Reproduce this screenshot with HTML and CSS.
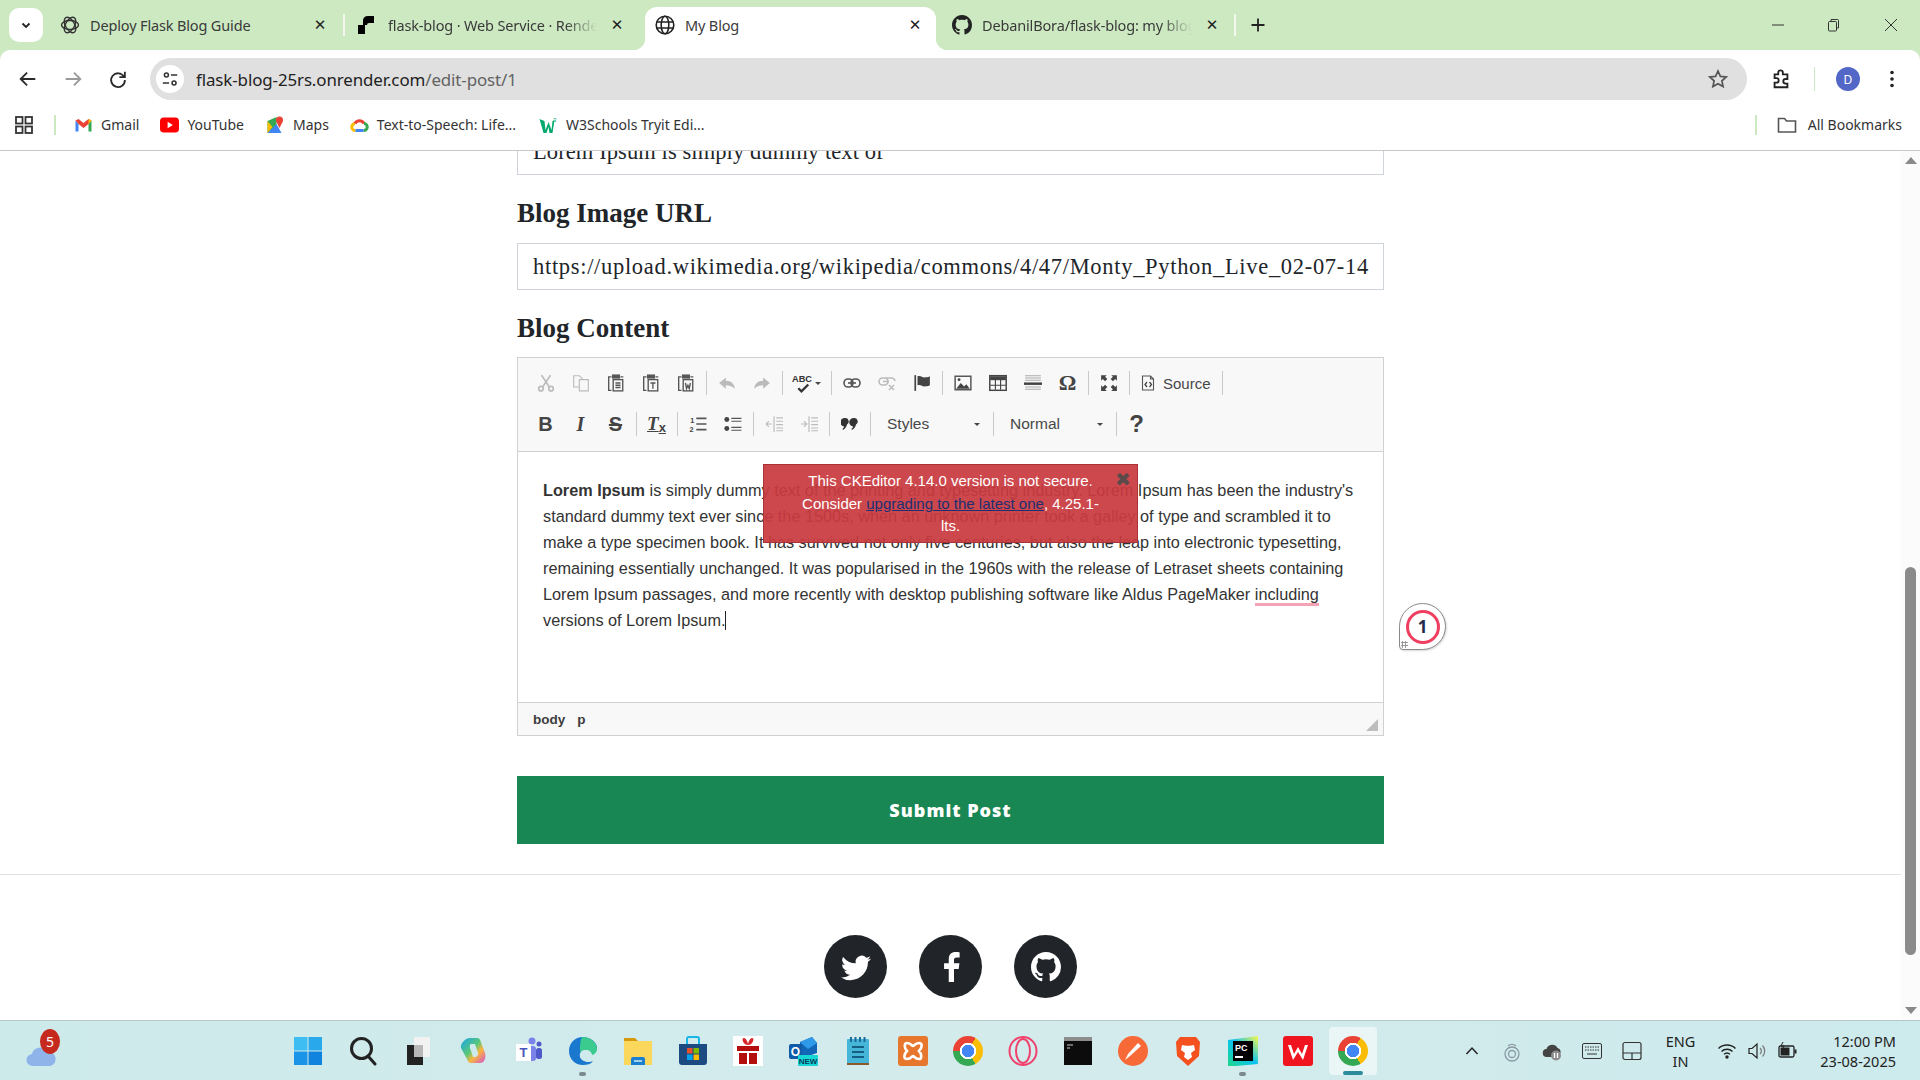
FILE: index.html
```html
<!DOCTYPE html>
<html lang="en">
<head>
<meta charset="utf-8">
<title>My Blog</title>
<link rel="stylesheet" href="styles.css">
</head>
<body>
<div class="screen">
  <header class="chrome">
    <div class="tabstrip">
      <button class="tab-menu"><svg viewBox="0 0 12 12" class="i12"><path d="M2.5 4.5 6 8l3.5-3.5" fill="none" stroke="#222" stroke-width="1.8"/></svg></button>
      <div class="tab tab-a">
        <svg class="favicon" viewBox="0 0 20 20" fill="none" stroke="#333" stroke-width="1.4"><ellipse cx="10" cy="10" rx="8.5" ry="4.5"/><ellipse cx="10" cy="10" rx="8.5" ry="4.5" transform="rotate(60 10 10)"/><ellipse cx="10" cy="10" rx="8.5" ry="4.5" transform="rotate(120 10 10)"/></svg>
        <span class="tab-title">Deploy Flask Blog Guide</span>
        <span class="tab-x">✕</span>
      </div>
      <div class="tab tab-b">
        <svg class="favicon" viewBox="0 0 20 20"><path d="M2 10h7v9H2zM7 5a5 5 0 0 1 5-4h6v7h-5a2 2 0 0 0-2 2H7z" fill="#000"/></svg>
        <span class="tab-title">flask-blog · Web Service · Render Dashboard</span>
        <span class="tab-x">✕</span>
      </div>
      <div class="tab tab-c">
        <svg class="favicon" viewBox="0 0 20 20" fill="none" stroke="#222" stroke-width="1.6"><circle cx="10" cy="10" r="8.800"/><ellipse cx="10" cy="10" rx="3.800" ry="8.800"/><path d="M1.500 7h17M1.500 13h17"/></svg>
        <span class="tab-title">My Blog</span>
        <span class="tab-x">✕</span>
      </div>
      <div class="tab tab-d">
        <svg class="favicon" viewBox="0 0 16 16"><path fill="#222" d="M8 0C3.58 0 0 3.58 0 8c0 3.54 2.29 6.53 5.47 7.59.4.07.55-.17.55-.38 0-.19-.01-.82-.01-1.49-2.01.37-2.53-.49-2.69-.94-.09-.23-.48-.94-.82-1.13-.28-.15-.68-.52-.01-.53.63-.01 1.08.58 1.23.82.72 1.21 1.87.87 2.33.66.07-.52.28-.87.51-1.07-1.78-.2-3.64-.89-3.64-3.95 0-.87.31-1.59.82-2.15-.08-.2-.36-1.02.08-2.12 0 0 .67-.21 2.2.82.64-.18 1.32-.27 2-.27.68 0 1.36.09 2 .27 1.53-1.04 2.2-.82 2.2-.82.44 1.1.16 1.92.08 2.12.51.56.82 1.27.82 2.15 0 3.07-1.87 3.75-3.65 3.95.29.25.54.73.54 1.48 0 1.07-.01 1.93-.01 2.2 0 .21.15.46.55.38A8.013 8.013 0 0016 8c0-4.42-3.58-8-8-8z"/></svg>
        <span class="tab-title">DebanilBora/flask-blog: my blog website</span>
        <span class="tab-x">✕</span>
      </div>
      <svg class="new-tab" viewBox="0 0 16 16"><path d="M8 1.500v13M1.500 8h13" stroke="#222" stroke-width="1.800"/></svg>
      <div class="win-controls">
        <svg class="win-btn" viewBox="0 0 14 14"><path d="M1 7h12" stroke="#333" stroke-width="1"/></svg>
        <svg class="win-btn" viewBox="0 0 14 14" fill="none" stroke="#333"><rect x="2.500" y="3.500" width="8" height="9.500" rx="1"/><path d="M5 3.500V1.500h6.500a1 1 0 0 1 1 1V10h-2"/></svg>
        <svg class="win-btn win-close" viewBox="0 0 14 14"><path d="m1 1 12 12M13 1 1 13" stroke="#333"/></svg>
      </div>
    </div>
    <div class="toolbar">
      <svg class="nav-btn" viewBox="0 0 24 24" fill="none" stroke="#2b2b2b" stroke-width="2"><path d="M20 12H5M11 5l-7 7 7 7"/></svg>
      <svg class="nav-btn" viewBox="0 0 24 24" fill="none" stroke="#9a9a9a" stroke-width="2"><path d="M4 12h15M13 5l7 7-7 7"/></svg>
      <svg class="nav-btn" viewBox="0 0 24 24" fill="none" stroke="#2b2b2b" stroke-width="2"><path d="M18.500 9.500A7.500 7.500 0 1 0 19.500 13M19.500 4v6h-6"/></svg>
      <div class="omnibox">
        <span class="site-chip"><svg viewBox="0 0 20 20" class="i18" fill="none" stroke="#333" stroke-width="1.700"><circle cx="6" cy="5.500" r="2.200"/><path d="M11 5.500h7M2 14.500h7"/><circle cx="14.500" cy="14.500" r="2.200"/></svg></span>
        <span class="url">flask-blog-25rs.onrender.com<span class="url-path">/edit-post/1</span></span>
        <svg class="star" viewBox="0 0 20 20" fill="none" stroke="#555" stroke-width="1.700"><path d="m10 2 2.400 5.400 5.800.6-4.300 3.900 1.200 5.700-5.100-2.900-5.100 2.900 1.200-5.700L1.800 8l5.800-.6z"/></svg>
      </div>
      <svg class="ext-btn" viewBox="0 0 24 24" fill="none" stroke="#222" stroke-width="2"><path d="M5 7h4V5a2.500 2.500 0 0 1 5 0v2h5v5h-2a2.500 2.500 0 0 0 0 5h2v4H5v-5h2a2.500 2.500 0 0 0 0-5H5z"/></svg>
      <span class="tool-sep"></span>
      <span class="avatar">D</span>
      <svg class="dots" viewBox="0 0 20 20"><circle cx="10" cy="3.500" r="1.800" fill="#222"/><circle cx="10" cy="10" r="1.800" fill="#222"/><circle cx="10" cy="16.500" r="1.800" fill="#222"/></svg>
    </div>
    <div class="bookmarks">
      <svg class="apps" viewBox="0 0 18 18" fill="none" stroke="#333" stroke-width="1.800"><rect x="1" y="1" width="6.500" height="6.500"/><rect x="10.500" y="1" width="6.500" height="6.500"/><rect x="1" y="10.500" width="6.500" height="6.500"/><rect x="10.500" y="10.500" width="6.500" height="6.500"/></svg>
      <span class="bm-sep"></span>
      <div class="bm bm-gmail"><svg class="bm-ic" viewBox="0 0 18 18"><path d="M1 4.500v11h3V8z" fill="#4285f4"/><path d="M14 8v7.500h3v-11z" fill="#34a853"/><path d="M1 4.500 4 3l5 4 5-4 3 1.500L14 8l-5 4-5-4z" fill="#ea4335"/><path d="M14 3l3 1.500L14 8z" fill="#fbbc04"/></svg><span>Gmail</span></div>
      <div class="bm bm-yt"><svg class="bm-ic" viewBox="0 0 20 18"><rect y="1" width="20" height="16" rx="4" fill="#f00"/><path d="m8 5.500 5.500 3.500L8 12.500z" fill="#fff"/></svg><span>YouTube</span></div>
      <div class="bm bm-maps"><svg class="bm-ic" viewBox="0 0 18 18"><path d="M1 5 10 1v16H1z" fill="#34a853"/><path d="M1 17 10 8l5 9z" fill="#4285f4"/><path d="M1 5v12l5-6z" fill="#fbbc04"/><circle cx="13" cy="4" r="3.500" fill="#ea4335"/><path d="m10 6 3 6 3-6z" fill="#ea4335"/></svg><span>Maps</span></div>
      <div class="bm bm-tts"><svg class="bm-ic" viewBox="0 0 18 18" fill="none" stroke-width="3"><path d="M5 14.500a3.500 3.500 0 0 1-.5-7" stroke="#fbbc04"/><path d="M4.500 7.500a5 5 0 0 1 9 0" stroke="#ea4335"/><path d="M13.500 7.500a3.500 3.500 0 0 1-.5 7" stroke="#34a853"/><path d="M5 14.500h8" stroke="#4285f4"/></svg><span>Text-to-Speech: Life...</span></div>
      <div class="bm bm-w3"><svg class="bm-ic" viewBox="0 0 18 18"><path d="m0 3 5 2 1 9 3-8 3 8 1-9 2-1-2 13h-3L9 11l-2 6H4z" fill="#04aa6d"/><text x="13.500" y="6" font-size="6" fill="#04aa6d" font-family="Liberation Sans">3</text></svg><span>W3Schools Tryit Edi...</span></div>
      <span class="bm-sep bm-sep-r"></span>
      <svg class="bm-folder" viewBox="0 0 20 18" fill="none" stroke="#555" stroke-width="1.600"><path d="M1.500 2.500h6l2 2.500h9v11h-17z"/></svg>
      <span class="bm-all">All Bookmarks</span>
    </div>
  </header>

  <div class="viewport">
    <main class="page">
      <div class="column">
        <div class="field field-first">Lorem Ipsum is simply dummy text of</div>
        <h2 class="label">Blog Image URL</h2>
        <div class="field">https://upload.wikimedia.org/wikipedia/commons/4/47/Monty_Python_Live_02-07-14</div>
        <h2 class="label label-tight">Blog Content</h2>

        <section class="editor">
          <div class="cke-top">
            <div class="cke-row">
              <span class="cbtn off"><svg viewBox="0 0 16 16" class="ci" fill="none" stroke="#333" stroke-width="1.500"><circle cx="3.500" cy="13" r="2"/><circle cx="12.500" cy="13" r="2"/><path d="M5 11.500 12 1M11 11.500 4 1"/></svg></span>
              <span class="cbtn off"><svg viewBox="0 0 16 16" class="ci" fill="none" stroke="#333"><path d="M6 11.500H1.500v-10h5l3 3M9.500 5h5v10h-8V5z"/></svg></span>
              <span class="cbtn"><svg viewBox="0 0 16 16" class="ci" fill="none" stroke="#555" stroke-width="1.200"><path d="M4 2.500H1.500v12H4M12 2.500H14.500"/><rect x="5" y="1" width="6" height="2.500" fill="#555"/><rect x="5.500" y="5" width="8.500" height="10"/><path d="M7.500 8h4.500M7.500 10h4.500M7.500 12h4.500"/></svg></span>
              <span class="cbtn"><svg viewBox="0 0 16 16" class="ci" fill="none" stroke="#555" stroke-width="1.200"><path d="M4 2.500H1.500v12H4M12 2.500H14.500"/><rect x="5" y="1" width="6" height="2.500" fill="#555"/><rect x="5.500" y="5" width="8.500" height="10"/><path d="M7.500 8h4.500M9.700 8v5"/></svg></span>
              <span class="cbtn"><svg viewBox="0 0 16 16" class="ci" fill="none" stroke="#555" stroke-width="1.200"><path d="M4 2.500H1.500v12H4M12 2.500H14.500"/><rect x="5" y="1" width="6" height="2.500" fill="#555"/><rect x="5.500" y="5" width="8.500" height="10"/><path d="M7.500 8l1 5 1.200-3 1.200 3 1-5"/></svg></span>
              <span class="csep"></span>
              <span class="cbtn off"><svg viewBox="0 0 16 16" class="ci"><path d="M7 3 1 8l6 5v-3c3 0 5 .5 8 3-.5-4-3-7-8-7z" fill="#333"/></svg></span>
              <span class="cbtn off"><svg viewBox="0 0 16 16" class="ci"><path d="m9 3 6 5-6 5v-3c-3 0-5 .5-8 3 .5-4 3-7 8-7z" fill="#333"/></svg></span>
              <span class="csep"></span>
              <span class="cbtn cbtn-spell"><svg viewBox="0 0 20 20" class="ci-spell"><text x="0" y="9" font-size="9.500" font-weight="700" textLength="19" lengthAdjust="spacingAndGlyphs" fill="#333" font-family="Liberation Sans">ABC</text><path d="m6 14.500 3 3 6.500-6.500" fill="none" stroke="#333" stroke-width="2.200"/></svg><i class="caret"></i></span>
              <span class="csep"></span>
              <span class="cbtn"><svg viewBox="0 0 18 16" class="ci" fill="none" stroke="#555" stroke-width="1.600"><rect x="1" y="4" width="9" height="8" rx="4"/><rect x="8" y="4" width="9" height="8" rx="4"/><path d="M5 8h8"/></svg></span>
              <span class="cbtn off"><svg viewBox="0 0 18 16" class="ci" fill="none" stroke="#333" stroke-width="1.600"><rect x="1" y="3" width="9" height="7" rx="3.500"/><path d="M8 3h6a3.500 3.500 0 0 1 3 3M5 6.500h6M11 10l5 5M16 10l-5 5"/></svg></span>
              <span class="cbtn"><svg viewBox="0 0 16 16" class="ci"><path d="M2 1v14" stroke="#444" stroke-width="1.500"/><path d="M4 2c3-1 4 1 6 1s3 0 5-1v8c-2 1-3 1-5 1s-3-2-6-1z" fill="#444"/></svg></span>
              <span class="csep"></span>
              <span class="cbtn"><svg viewBox="0 0 16 16" class="ci"><rect x="1" y="2" width="14" height="12" fill="none" stroke="#555" stroke-width="1.300"/><path d="m2 13 4-5 3 3 2-2 3 4z" fill="#444"/><circle cx="4.500" cy="5" r="1.300" fill="#444"/></svg></span>
              <span class="cbtn"><svg viewBox="0 0 16 16" class="ci"><rect x=".7" y="1.500" width="14.600" height="13" fill="none" stroke="#444" stroke-width="1.300"/><rect x="1" y="2" width="14" height="3.500" fill="#444"/><path d="M1 10h14M5.700 5v9M10.300 5v9" stroke="#444"/></svg></span>
              <span class="cbtn"><svg viewBox="0 0 16 16" class="ci"><path d="M1 1.500h14M1 3.500h14M1 5.500h14M1 11.500h14M1 13.500h14" stroke="#aaa"/><rect y="7.500" width="16" height="2.200" fill="#444"/></svg></span>
              <span class="cbtn cglyph omega">Ω</span>
              <span class="csep"></span>
              <span class="cbtn"><svg viewBox="0 0 16 16" class="ci"><path d="M1 1h5L4.500 2.500 6.500 4.500 4.500 6.500 2.500 4.500 1 6zM15 1v5l-1.500-1.500-2 2-2-2 2-2L10 1zM1 15v-5l1.500 1.500 2-2 2 2-2 2L6 15zM15 15h-5l1.500-1.500-2-2 2-2 2 2L15 10z" fill="#444"/></svg></span>
              <span class="csep"></span>
              <span class="cbtn cbtn-source"><svg viewBox="0 0 16 16" class="ci-src" fill="none" stroke="#555" stroke-width="1.100"><path d="M2.500 1h8l3 3v11h-11zM10.500 1v3h3"/><path d="M7 7 5 9.500 7 12M9.500 7l2 2.500-2 2.500" stroke="#444" stroke-width="1.300"/></svg><span>Source</span></span>
              <span class="csep"></span>
            </div>
            <div class="cke-row">
              <span class="cbtn cglyph g-b">B</span>
              <span class="cbtn cglyph g-i">I</span>
              <span class="cbtn cglyph g-s">S</span>
              <span class="csep"></span>
              <span class="cbtn cglyph g-tx">T<small>x</small></span>
              <span class="csep"></span>
              <span class="cbtn"><svg viewBox="0 0 16 16" class="ci"><path d="M6.500 3h9M6.500 8h9M6.500 13h9" stroke="#555" stroke-width="1.500"/><text x="1" y="7" font-size="6.500" font-weight="700" fill="#444" font-family="Liberation Sans">1</text><text x="0.500" y="15" font-size="6.500" font-weight="700" fill="#444" font-family="Liberation Sans">2</text></svg></span>
              <span class="cbtn"><svg viewBox="0 0 16 16" class="ci"><circle cx="2.500" cy="4" r="2.200" fill="#444"/><circle cx="2.500" cy="12" r="2.200" fill="#444"/><path d="M6.500 3h9M6.500 5.500h9M6.500 11h9M6.500 13.500h9" stroke="#555"/></svg></span>
              <span class="csep"></span>
              <span class="cbtn off"><svg viewBox="0 0 16 16" class="ci" stroke="#333" fill="none"><path d="M8 1v14M10 2.500h6M10 5.500h6M10 8.500h6M10 11.500h6M10 14h6M1 8h5M3.500 5.500 1 8l2.500 2.500"/></svg></span>
              <span class="cbtn off"><svg viewBox="0 0 16 16" class="ci" stroke="#333" fill="none"><path d="M8 1v14M10 2.500h6M10 5.500h6M10 8.500h6M10 11.500h6M10 14h6M1 8h5M3.500 5.500 6 8l-2.500 2.500"/></svg></span>
              <span class="csep"></span>
              <span class="cbtn"><svg viewBox="0 0 18 16" class="ci"><path d="M4 2a3.500 3.500 0 0 1 2 6.500C5.500 11 4 13 2 14l-.5-1c1-.8 1.500-1.700 1.600-2.500A4 4 0 0 1 4 2zM13 2a3.500 3.500 0 0 1 2 6.500c-.5 2.500-2 4.500-4 5.500l-.5-1c1-.8 1.500-1.700 1.600-2.500A4 4 0 0 1 13 2z" fill="#333"/></svg></span>
              <span class="csep"></span>
              <span class="ccombo">Styles<i class="caret"></i></span>
              <span class="csep"></span>
              <span class="ccombo">Normal<i class="caret"></i></span>
              <span class="csep"></span>
              <span class="cbtn cglyph g-help">?</span>
            </div>
          </div>
          <div class="cke-body">
            <p class="cke-text"><strong>Lorem Ipsum</strong> is simply dummy text of the printing and typesetting industry. Lorem Ipsum has been the industry's standard dummy text ever since the 1500s, when an unknown printer took a galley of type and scrambled it to make a type specimen book. It has survived not only five centuries, but also the leap into electronic typesetting, remaining essentially unchanged. It was popularised in the 1960s with the release of Letraset sheets containing Lorem Ipsum passages, and more recently with desktop publishing software like Aldus PageMaker <span class="spell">including</span> versions of Lorem Ipsum.<span class="cursor"></span></p>
            <div class="cke-notice">
              <span class="notice-x">✖</span>
              This CKEditor 4.14.0 version is not secure.<br>Consider <a href="#">upgrading to the latest one</a>, 4.25.1-<br>lts.
            </div>
          </div>
          <div class="cke-bottom">
            <span class="crumb">body</span><span class="crumb">p</span>
            <i class="resizer"></i>
          </div>
          <div class="gram-badge"><span class="gram-ring">1</span><i class="gram-grip"></i></div>
        </section>

        <button class="submit">Submit Post</button>
      </div>
      <hr class="rule">
      <div class="social">
        <a class="soc"><svg viewBox="0 0 16 16" class="soc-ic"><path fill="#fff" d="M5.026 15c6.038 0 9.341-5.003 9.341-9.334 0-.14 0-.282-.006-.422A6.685 6.685 0 0 0 16 3.542a6.658 6.658 0 0 1-1.889.518 3.301 3.301 0 0 0 1.447-1.817 6.533 6.533 0 0 1-2.087.793A3.286 3.286 0 0 0 7.875 6.03a9.325 9.325 0 0 1-6.767-3.429 3.289 3.289 0 0 0 1.018 4.382A3.323 3.323 0 0 1 .64 6.575v.045a3.288 3.288 0 0 0 2.632 3.218 3.203 3.203 0 0 1-.865.115 3.23 3.23 0 0 1-.614-.057 3.283 3.283 0 0 0 3.067 2.277A6.588 6.588 0 0 1 .78 13.58a6.32 6.32 0 0 1-.78-.045A9.344 9.344 0 0 0 5.026 15z"/></svg></a>
        <a class="soc"><svg viewBox="0 0 16 16" class="soc-ic"><path fill="#fff" d="M9.600 16V9h2.500l.4-3H9.600V4.300c0-.9.3-1.400 1.500-1.400h1.500V.2C12.300.1 11.400 0 10.400 0 8.300 0 6.800 1.300 6.800 3.800V6H4.300v3h2.500v7z"/></svg></a>
        <a class="soc"><svg viewBox="0 0 16 16" class="soc-ic"><path fill="#fff" d="M8 0C3.58 0 0 3.58 0 8c0 3.54 2.29 6.53 5.47 7.59.4.07.55-.17.55-.38 0-.19-.01-.82-.01-1.49-2.01.37-2.53-.49-2.69-.94-.09-.23-.48-.94-.82-1.13-.28-.15-.68-.52-.01-.53.63-.01 1.08.58 1.23.82.72 1.21 1.87.87 2.33.66.07-.52.28-.87.51-1.07-1.78-.2-3.64-.89-3.64-3.95 0-.87.31-1.59.82-2.15-.08-.2-.36-1.02.08-2.12 0 0 .67-.21 2.2.82.64-.18 1.32-.27 2-.27.68 0 1.36.09 2 .27 1.53-1.04 2.2-.82 2.2-.82.44 1.1.16 1.92.08 2.12.51.56.82 1.27.82 2.15 0 3.07-1.87 3.75-3.65 3.95.29.25.54.73.54 1.48 0 1.07-.01 1.93-.01 2.2 0 .21.15.46.55.38A8.013 8.013 0 0016 8c0-4.42-3.58-8-8-8z"/></svg></a>
      </div>
    </main>
    <aside class="scrollbar">
      <i class="sb-up"></i>
      <i class="sb-thumb"></i>
      <i class="sb-down"></i>
    </aside>
  </div>

  <footer class="taskbar">
    <div class="weather">
      <svg class="weather-ic" viewBox="0 0 32 32"><path d="M8 28a6 6 0 0 1-1-12 8 8 0 0 1 15-2 7 7 0 0 1 3 14z" fill="#8fb4ea"/></svg>
      <span class="weather-badge">5</span>
    </div>
    <div class="tb-item"><svg class="tb-ic" viewBox="0 0 30 30"><path d="M1 1h13.500v13.500H1z" fill="#3ebdf2"/><path d="M15.500 1H29v13.500H15.500z" fill="#2aa8ec"/><path d="M1 15.500h13.500V29H1z" fill="#1a94e6"/><path d="M15.500 15.500H29V29H15.500z" fill="#0f83dd"/></svg></div>
    <div class="tb-item"><svg class="tb-ic" viewBox="0 0 30 30" fill="none" stroke="#222" stroke-width="3"><circle cx="13.500" cy="12.500" r="10"/><path d="m20 20 7 8" stroke-linecap="round"/></svg></div>
    <div class="tb-item"><svg class="tb-ic" viewBox="0 0 30 30"><rect x="4" y="9" width="16" height="20" fill="#222"/><rect x="11" y="1" width="16" height="20" fill="#f2f2f2"/><rect x="11" y="9" width="9" height="12" fill="#b8b8b8"/></svg></div>
    <div class="tb-item"><svg class="tb-ic" viewBox="0 0 30 30"><defs><linearGradient id="cop" x1="0" y1="0" x2="1" y2="1"><stop offset="0" stop-color="#19a5ea"/><stop offset=".45" stop-color="#58c77a"/><stop offset=".65" stop-color="#f9b63f"/><stop offset="1" stop-color="#d44fd0"/></linearGradient></defs><path d="M12 2h7c2 0 3 1 3.500 3L27 17c1.500 5-1 10-5 10h-9c-2 0-3-1-3.500-3L3 12C2 7 8 2 12 2z" fill="url(#cop)"/><path d="M13 8h4l3 9c.5 2-1 4-3 4h-2l-3-9c-.5-2 0-4 1-4z" fill="#cfeaec"/></svg></div>
    <div class="tb-item"><svg class="tb-ic" viewBox="0 0 30 30"><circle cx="19" cy="5" r="3.500" fill="#7b83eb"/><circle cx="26" cy="8" r="2.500" fill="#5059c9"/><rect x="14" y="10" width="9" height="15" rx="3" fill="#7b83eb"/><rect x="23" y="12" width="6" height="11" rx="2.500" fill="#5059c9"/><rect x="3" y="8" width="15" height="17" fill="#fff"/><text x="10.500" y="21" text-anchor="middle" font-size="13" font-weight="700" fill="#4b53bc" font-family="Liberation Sans">T</text></svg></div>
    <div class="tb-item"><svg class="tb-ic" viewBox="0 0 30 30"><path d="M15 1C7 1 1 7 1 15c0 8 6 14 14 14 4 0 8-1 10-4-4 2-11 1-13-4-1-4 2-8 6-8 3 0 6 2 6 5 2 0 5-3 5-6C29 6 22 1 15 1z" fill="#1b78cf"/><path d="M15 1c7 0 14 5 14 12 0 3-3 6-5 6 0-3-3-5-6-5-4 0-6 2-6 2 0-5 0-15 3-15z" fill="#3ccb8f"/><path d="M18 14c-3 0-6 2-6 6 1 3 3 5 7 5-2-3 0-6 3-6-.5-3-2-5-4-5z" fill="#cfeaec"/></svg></div>
    <div class="tb-item"><svg class="tb-ic" viewBox="0 0 30 30"><path d="M1 2h11l3 3H1z" fill="#d69a0f"/><rect x="1" y="5" width="28" height="24" fill="#fbd75b"/><path d="M8 23a2 2 0 0 1 2-2h10a2 2 0 0 1 2 2v6H8z" fill="#1a7fd1"/><path d="M11 25h8" stroke="#cfeaec" stroke-width="1.500"/></svg></div>
    <div class="tb-item"><svg class="tb-ic" viewBox="0 0 30 30"><path d="M9 8V3a2 2 0 0 1 2-2h8a2 2 0 0 1 2 2v5" fill="none" stroke="#15b6e8" stroke-width="2"/><path d="M1 8h28v18a3 3 0 0 1-3 3H4a3 3 0 0 1-3-3z" fill="#1c4b82"/><rect x="9" y="12" width="5.500" height="5.500" fill="#e8502f"/><rect x="15.500" y="12" width="5.500" height="5.500" fill="#7fba00"/><rect x="9" y="18.500" width="5.500" height="5.500" fill="#00a4ef"/><rect x="15.500" y="18.500" width="5.500" height="5.500" fill="#ffb900"/></svg></div>
    <div class="tb-item"><svg class="tb-ic" viewBox="0 0 30 30"><rect width="30" height="30" fill="#fff"/><path d="M4 10h22v5H4zM6 17h8v11H6zM16 17h8v11h-8z" fill="#b30f0f"/><path d="M15 9C10 9 8 2 11 2c2 0 4 4 4 7zM15 9c5 0 7-7 4-7-2 0-4 4-4 7z" fill="#d7262a"/></svg></div>
    <div class="tb-item"><svg class="tb-ic" viewBox="0 0 30 30"><path d="M12 6 24 1l5 6v10l-17 6z" fill="#1266b8"/><path d="M24 1l5 6-9 6-8-7z" fill="#2f9be8"/><rect x="1" y="8" width="13" height="15" rx="2" fill="#0f5ba8"/><text x="7.500" y="20" text-anchor="middle" font-size="12" font-weight="700" fill="#fff" font-family="Liberation Sans">O</text><rect x="10" y="19" width="20" height="11" rx="1" fill="#16d6d6"/><text x="20" y="28" text-anchor="middle" font-size="8" font-weight="700" fill="#0a3a5a" font-family="Liberation Sans">NEW</text></svg></div>
    <div class="tb-item"><svg class="tb-ic" viewBox="0 0 30 30"><rect x="4" y="3" width="22" height="25" rx="1" fill="#45b5d8"/><path d="M8 1v5M12.500 1v5M17 1v5M21.500 1v5" stroke="#1c6b96" stroke-width="2"/><path d="M9 11h12M9 16h12M9 21h12" stroke="#155f85" stroke-width="2.200"/><rect x="4" y="27" width="22" height="2" fill="#8a5a2b"/></svg></div>
    <div class="tb-item"><svg class="tb-ic" viewBox="0 0 30 30"><rect width="30" height="30" rx="3" fill="#e8772e"/><path d="M9 7c4 0 5 3 6 3s2-3 6-3 3 5 0 8c3 3 3 8 0 8-4 0-5-3-6-3s-2 3-6 3-3-5 0-8c-3-3-3-8 0-8z" fill="none" stroke="#fff" stroke-width="2.600"/></svg></div>
    <div class="tb-item"><span class="chrome-logo"></span></div>
    <div class="tb-item"><svg class="tb-ic" viewBox="0 0 30 30" fill="none" stroke="#f0416c" stroke-width="2"><ellipse cx="15" cy="15" rx="13.500" ry="14"/><ellipse cx="15" cy="15" rx="7" ry="12"/></svg></div>
    <div class="tb-item"><svg class="tb-ic" viewBox="0 0 30 30"><rect x="1" y="1" width="28" height="28" fill="#0c0c0c"/><rect x="1" y="1" width="28" height="4" fill="#8d8d8d"/><path d="M4 9h6M4 12h3" stroke="#ccc"/></svg></div>
    <div class="tb-item"><svg class="tb-ic" viewBox="0 0 30 30"><circle cx="15" cy="15" r="15" fill="#f76936"/><path d="m7 24 3-6 10-11 3 3-11 10z" fill="#fff"/></svg></div>
    <div class="tb-item"><svg class="tb-ic" viewBox="0 0 30 30"><path d="M7 1h16l4 5-1 14-11 10L4 20 3 6z" fill="#f4511e"/><path d="M9 9c3 1 9 1 12 0l1 5-4 3 1 4-4 3-4-3 1-4-4-3z" fill="#fff"/></svg></div>
    <div class="tb-item"><svg class="tb-ic" viewBox="0 0 30 30"><defs><linearGradient id="pyc" x1="0" y1="1" x2="1" y2="0"><stop offset="0" stop-color="#21d789"/><stop offset=".5" stop-color="#07c3f2"/><stop offset="1" stop-color="#fcf84a"/></linearGradient></defs><path d="M0 4 30 0v28L8 30H0z" fill="url(#pyc)"/><rect x="5" y="5" width="20" height="20" fill="#000"/><text x="7" y="15" font-size="9" font-weight="700" fill="#fff" font-family="Liberation Sans">PC</text><rect x="7" y="20" width="8" height="2" fill="#fff"/></svg></div>
    <div class="tb-item"><svg class="tb-ic" viewBox="0 0 30 30"><rect width="30" height="30" rx="3" fill="#f0141e"/><path d="m5 9 3 0 3 9 4-7 4 7 3-9 3 0-5 15-5-8-5 8z" fill="#fff"/></svg></div>
    <div class="tb-item tb-active"><span class="chrome-logo"></span></div>

    <div class="tray">
      <span class="tray-ic"><svg class="i16" viewBox="0 0 16 16" fill="none" stroke="#222" stroke-width="1.500"><path d="m2.500 11 5.500-6 5.500 6"/></svg></span>
      <span class="tray-ic"><svg class="i22" viewBox="0 0 22 22" fill="none" stroke="#8a9aa5" stroke-width="1.300"><circle cx="11" cy="14" r="7"/><circle cx="11" cy="14" r="3.500"/><path d="M7 6a5 4 0 0 1 8 0"/></svg></span>
      <span class="tray-ic"><svg class="i22" viewBox="0 0 22 22"><path d="M6 17a4 4 0 0 1-.5-8 6 6 0 0 1 11-1 4.500 4.500 0 0 1 3 5l-6 4z" fill="#444"/><circle cx="15" cy="15.500" r="5" fill="#8c8c8c"/><path d="M13.500 13v5M16.500 13v5" stroke="#fff" stroke-width="1.300"/></svg></span>
      <span class="tray-ic"><svg class="i22" viewBox="0 0 22 22" fill="none" stroke="#333"><rect x="1.500" y="3.500" width="19" height="15" rx="1.500"/><path d="M4 7h14M4 10h14" stroke-dasharray="1.500 1"/><path d="M6 14h10"/></svg></span>
      <span class="tray-ic"><svg class="i22" viewBox="0 0 22 22" fill="none" stroke="#333" stroke-width="1.200"><rect x="2" y="2.500" width="18" height="17" rx="2"/><path d="M2 13h18M11 13v6.500"/></svg></span>
      <span class="lang">ENG<br>IN</span>
      <span class="tray-sm"><svg class="i20" viewBox="0 0 20 20" fill="none" stroke="#222" stroke-width="1.400"><path d="M1.500 7.500a12 12 0 0 1 17 0M4.500 10.500a8 8 0 0 1 11 0M7 13.300a4.500 4.500 0 0 1 6 0"/><circle cx="10" cy="16" r="1" fill="#222"/></svg></span>
      <span class="tray-sm"><svg class="i20" viewBox="0 0 20 20" fill="none" stroke="#222" stroke-width="1.200"><path d="M2 7.500h3l5-4.500v14l-5-4.500H2z"/><path d="M13 7a4 4 0 0 1 0 6M15.500 4.500a8 8 0 0 1 0 11" stroke="#777"/></svg></span>
      <span class="tray-sm"><svg class="i20" viewBox="0 0 20 20"><rect x="2" y="5" width="15" height="11" rx="1.500" fill="none" stroke="#222" stroke-width="1.300"/><rect x="3.500" y="6.500" width="9" height="8" fill="#222"/><rect x="17.500" y="8.500" width="2" height="4" fill="#222"/><path d="M6 1 4 5h3L5 9" stroke="#222" fill="none"/></svg></span>
      <span class="clock">12:00 PM<br>23-08-2025</span>
    </div>
  </footer>
</div>
</body>
</html>
```

FILE: styles.css
```css
* { box-sizing: border-box; }
html, body { margin: 0; height: 100%; overflow: hidden; }
body { background: #fff; font-family: "Liberation Sans", Arial, sans-serif; }
.screen { width: 1920px; height: 1080px; display: flex; flex-direction: column; overflow: hidden; }
svg { display: block; flex: none; }
.i12 { width: 12px; height: 12px; }
.i16 { width: 16px; height: 16px; }
.i18 { width: 18px; height: 18px; }
.i20 { width: 20px; height: 20px; }
.i22 { width: 22px; height: 22px; }

/* browser chrome */
.chrome { flex: none; height: 151px; background: #cde9c2; font-family: "Noto Sans", sans-serif; color: #333; }
.tabstrip { height: 50px; display: flex; align-items: flex-end; padding-left: 9px; }
.tab-menu { flex: none; width: 34px; height: 34px; margin-bottom: 8px; border: 0; border-radius: 10px; background: #fff; display: flex; align-items: center; justify-content: center; padding: 0; }
.tab { flex: none; height: 43px; display: flex; align-items: center; padding-bottom: 7px; padding-left: 10px; position: relative; font-size: 14.500px; letter-spacing: -.15px; color: #3a3a3a; }
.tab-a { margin-left: 7px; width: 295px; padding-right: 17px; }
.tab-b { width: 300px; padding-left: 11px; padding-right: 20px; }
.tab-c { width: 291px; padding-right: 13px; background: #fff; border-radius: 12px 12px 0 0; }
.tab-d { width: 300px; padding-left: 16px; padding-right: 16px; }
.tab-a::after, .tab-d::after { content: ""; position: absolute; right: 0; top: 7px; height: 22px; width: 2px; background: #f2f8ee; }
.tab-c::before, .tab-c::after { content: ""; position: absolute; bottom: 0; width: 12px; height: 12px; }
.tab-c::before { left: -12px; background: radial-gradient(circle at 0 0, transparent 12px, #fff 12.500px); }
.tab-c::after { right: -12px; background: radial-gradient(circle at 100% 0, transparent 12px, #fff 12.500px); }
.favicon { width: 20px; height: 20px; margin-right: 10px; }
.tab-b .favicon { margin-right: 12px; }
.tab-title { flex: 1; min-width: 0; white-space: nowrap; overflow: hidden; }
.tab-b .tab-title, .tab-d .tab-title { -webkit-mask-image: linear-gradient(90deg, #000 85%, transparent); mask-image: linear-gradient(90deg, #000 85%, transparent); }
.tab-x { flex: none; width: 16px; margin-left: 12px; text-align: center; font-size: 15px; font-weight: 700; color: #222; font-family: "DejaVu Sans", sans-serif; }
.new-tab { width: 16px; height: 16px; margin: 0 0 17px 14px; }
.win-controls { margin-left: auto; display: flex; align-items: center; height: 50px; align-self: flex-start; padding-right: 22px; }
.win-btn { width: 14px; height: 14px; margin-left: 41px; }
.win-close { margin-left: 44px; }

.toolbar { height: 54px; padding: 8px 18px 4px 6px; display: flex; align-items: center; background: #fff; border-radius: 10px 10px 0 0; }
.nav-btn { width: 22px; height: 22px; margin: 0 11px; }
.nav-btn + .nav-btn { margin-left: 12px; margin-right: 11px; }
.nav-btn + .nav-btn + .nav-btn { margin-left: 12px; margin-right: 21px; }
.omnibox { flex: 1; height: 42px; border-radius: 21px; background: #e0e0e0; display: flex; align-items: center; padding: 0 0 0 6px; }
.site-chip { width: 28px; height: 28px; border-radius: 50%; background: #fff; display: flex; align-items: center; justify-content: center; }
.url { margin-left: 12px; font-size: 16.900px; color: #222; letter-spacing: -.1px; }
.url-path { color: #636363; }
.star { width: 20px; height: 20px; margin-left: auto; margin-right: 19px; }
.ext-btn { width: 22px; height: 22px; margin-left: 23px; }
.tool-sep { width: 1px; height: 24px; background: #cde9c2; margin-left: 22px; }
.avatar { width: 24px; height: 24px; margin-left: 21px; border-radius: 50%; background: #5367c7; color: #fff; font-size: 12px; display: flex; align-items: center; justify-content: center; }
.dots { width: 20px; height: 20px; margin-left: 22px; }

.bookmarks { height: 47px; padding: 0 18px 5px 15px; display: flex; align-items: center; background: #fff; border-bottom: 1px solid #c8c8c8; font-size: 14px; color: #333; }
.apps { width: 18px; height: 18px; }
.bm-sep { width: 2px; height: 20px; background: #cde9c2; margin-left: 21px; }
.bm { display: flex; align-items: center; gap: 8px; white-space: nowrap; }
.bm-ic { width: 19px; height: 18px; }
.bm-gmail { margin-left: 18px; }
.bm-yt { margin-left: 21px; }
.bm-maps { margin-left: 22px; }
.bm-tts { margin-left: 21px; }
.bm-w3 { margin-left: 23px; }
.bm-sep-r { margin-left: auto; }
.bm-folder { width: 20px; height: 18px; margin-left: 20px; }
.bm-all { margin-left: 11px; }

/* page */
.viewport { flex: none; height: 869px; display: flex; background: #fff; }
.page { flex: 1; min-width: 0; overflow: hidden; }
.column { width: 867px; margin: -23px auto 0; }
.field { height: 47px; padding: 0 15px; border: 1px solid #ced4da; display: flex; align-items: center; white-space: nowrap; overflow: hidden; font-family: "Liberation Serif", serif; font-size: 22.500px; letter-spacing: .69px; color: #212529; }
.field-first { letter-spacing: .09px; }
.label { margin: 23px 0 15px; font-family: "Liberation Serif", serif; font-weight: 700; font-size: 27px; line-height: 30px; color: #212529; }
.label-tight { margin: 23px 0 14px; }

.editor { position: relative; height: 379px; border: 1px solid #d1d1d1; display: flex; flex-direction: column; }
.cke-top { height: 94px; background: #f8f8f8; border-bottom: 1px solid #d1d1d1; padding: 7px 0 0 10px; }
.cke-row { height: 36px; display: flex; align-items: center; margin-bottom: 5px; }
.cbtn { flex: none; width: 35px; height: 36px; display: flex; align-items: center; justify-content: center; }
.cbtn.off { opacity: .3; }
.ci { width: 18px; height: 18px; }
.ci-src { width: 16px; height: 18px; }
.ci-spell { width: 21px; height: 21px; }
.csep { flex: none; width: 1px; height: 24px; background: #c9c9c9; margin: 0 2px 0 3px; }
.cbtn-spell { width: 43px; gap: 2px; }
.cbtn-source { width: 87px; justify-content: flex-start; padding-left: 8px; gap: 7px; font-size: 15px; color: #474747; }
.caret { flex: none; width: 0; height: 0; border: 3px solid transparent; border-top: 3px solid #474747; border-bottom: 0; }
.cglyph { color: #444; }
.g-b { font: 700 20px "Liberation Sans", sans-serif; }
.g-i { font: italic 700 20px "Liberation Serif", serif; }
.g-s { font: 700 20px "Liberation Sans", sans-serif; text-decoration: line-through; }
.g-tx { font: italic 700 19px "Liberation Serif", serif; text-decoration: underline; }
.g-tx small { font: 700 13px "Liberation Sans", sans-serif; align-self: flex-end; margin-bottom: 7px; text-decoration: none; display: inline-block; }
.omega { font: 700 22px "Liberation Serif", serif; }
.g-help { font: 700 24px "Liberation Sans", sans-serif; }
.ccombo { flex: none; width: 117px; height: 36px; display: flex; align-items: center; justify-content: space-between; padding: 0 10px 0 14px; font-size: 15.500px; color: #474747; }
.cke-body { flex: none; height: 250px; background: #fff; padding: 25px 24px 0 25px; color: #333; position: relative; }
.cke-text { margin: 0; font-size: 16.250px; line-height: 26px; }
.spell { border-bottom: 3px solid #f4a3b4; padding-bottom: 0; }
.cursor { display: inline-block; width: 1px; height: 19px; background: #222; vertical-align: -4px; }
.cke-notice { position: absolute; left: 245px; top: 12px; width: 375px; height: 79px; padding: 5px 20px 0; background: rgba(200, 58, 62, .93); border: 1px solid #a83236; color: #fff; text-align: center; font-size: 15px; line-height: 22.500px; }
.cke-notice a { color: #1c2f73; text-decoration: underline; }
.notice-x { position: absolute; right: 6px; top: 3px; color: #5a4a4a; font-size: 19px; font-family: "DejaVu Sans", sans-serif; }
.cke-bottom { flex: 1; background: #f8f8f8; border-top: 1px solid #d1d1d1; display: flex; align-items: center; padding-left: 15px; gap: 12px; font-size: 13.500px; font-weight: 700; color: #3d3d3d; position: relative; }
.resizer { position: absolute; right: 5px; bottom: 4px; width: 0; height: 0; border-left: 12px solid transparent; border-bottom: 12px solid #bdbdbd; }
.gram-badge { position: absolute; left: 881px; top: 245px; width: 47px; height: 47px; border: 1px solid #8a8a8a; border-radius: 50% 50% 50% 4px; background: #fff; display: flex; align-items: center; justify-content: center; box-shadow: 1px 1px 2px rgba(0,0,0,.15); }
.gram-ring { width: 34px; height: 34px; border: 3px solid #ef3e5f; border-radius: 50%; display: flex; align-items: center; justify-content: center; font: 700 17px "Noto Sans", sans-serif; color: #222a4d; }
.gram-grip { position: absolute; left: 1px; bottom: 1px; width: 7px; height: 7px; background: radial-gradient(circle, #999 1px, transparent 1.200px) 0 0 / 3px 3px; }

.submit { display: block; width: 867px; height: 68px; margin-top: 40px; padding: 0; border: 0; background: #198754; color: #fff; font: 800 18px "Open Sans", sans-serif; letter-spacing: 1px; }
.rule { margin: 30px 0 0; border: 0; border-top: 1px solid #dee2e6; }
.social { display: flex; justify-content: center; gap: 32px; margin-top: 60px; }
.soc { width: 63px; height: 63px; border-radius: 50%; background: #212529; display: flex; align-items: center; justify-content: center; }
.soc-ic { width: 30px; height: 30px; }

.scrollbar { flex: none; width: 19px; background: #fbfbfb; position: relative; display: flex; flex-direction: column; align-items: center; }
.sb-up { margin-top: 6px; width: 0; height: 0; border: 6px solid transparent; border-bottom: 7px solid #8a8a8a; border-top: 0; }
.sb-thumb { width: 11px; height: 388px; margin-top: 403px; background: #8a8a8a; border-radius: 6px; }
.sb-down { margin-top: 52px; width: 0; height: 0; border: 6px solid transparent; border-top: 7px solid #8a8a8a; border-bottom: 0; }

/* taskbar */
.taskbar { flex: none; height: 60px; border-top: 1px solid #b5c7ca; background: linear-gradient(90deg, #cdeaeb, #d4ebec 50%, #cdeaec); display: flex; align-items: center; font-family: "Noto Sans", sans-serif; color: #222; }
.weather { flex: none; width: 280px; height: 100%; position: relative; }
.weather-ic { position: absolute; left: 25px; top: 17px; width: 32px; height: 32px; }
.weather-badge { position: absolute; left: 40px; top: 8px; width: 20px; height: 25px; border-radius: 50%; background: #c62a1f; color: #fff; font-size: 14px; display: flex; align-items: center; justify-content: center; }
.tb-item { flex: none; width: 55px; height: 48px; display: flex; align-items: center; justify-content: center; position: relative; }
.tb-ic { width: 30px; height: 30px; }
.tb-item:nth-child(7)::after, .tb-item:nth-child(19)::after { content: ""; position: absolute; left: 24px; bottom: -1px; width: 7px; height: 4px; border-radius: 2px; background: #7b8a8e; }
.tb-active { width: 48px; margin-left: 4px; background: rgba(255,255,255,.55); border-radius: 4px; }
.tb-active::after { content: ""; position: absolute; left: 14px; bottom: 0; width: 20px; height: 4px; border-radius: 2px; background: #2e8b9b; }
.chrome-logo { width: 30px; height: 30px; border-radius: 50%; background: radial-gradient(circle, #4285f4 0 6px, #fff 6.500px 8px, transparent 8.500px), conic-gradient(from 30deg, #fbbc04 0 120deg, #34a853 120deg 240deg, #ea4335 240deg 360deg); }
.tray { margin-left: auto; display: flex; align-items: center; height: 100%; padding-right: 24px; font-size: 14.500px; }
.tray-ic { width: 40px; display: flex; justify-content: center; }
.tray-sm { width: 30px; display: flex; justify-content: center; }
.lang { width: 58px; padding: 0 9px 0 8px; text-align: center; line-height: 20px; margin-right: 2px; }
.clock { width: 94px; text-align: right; line-height: 20px; white-space: nowrap; }
```
